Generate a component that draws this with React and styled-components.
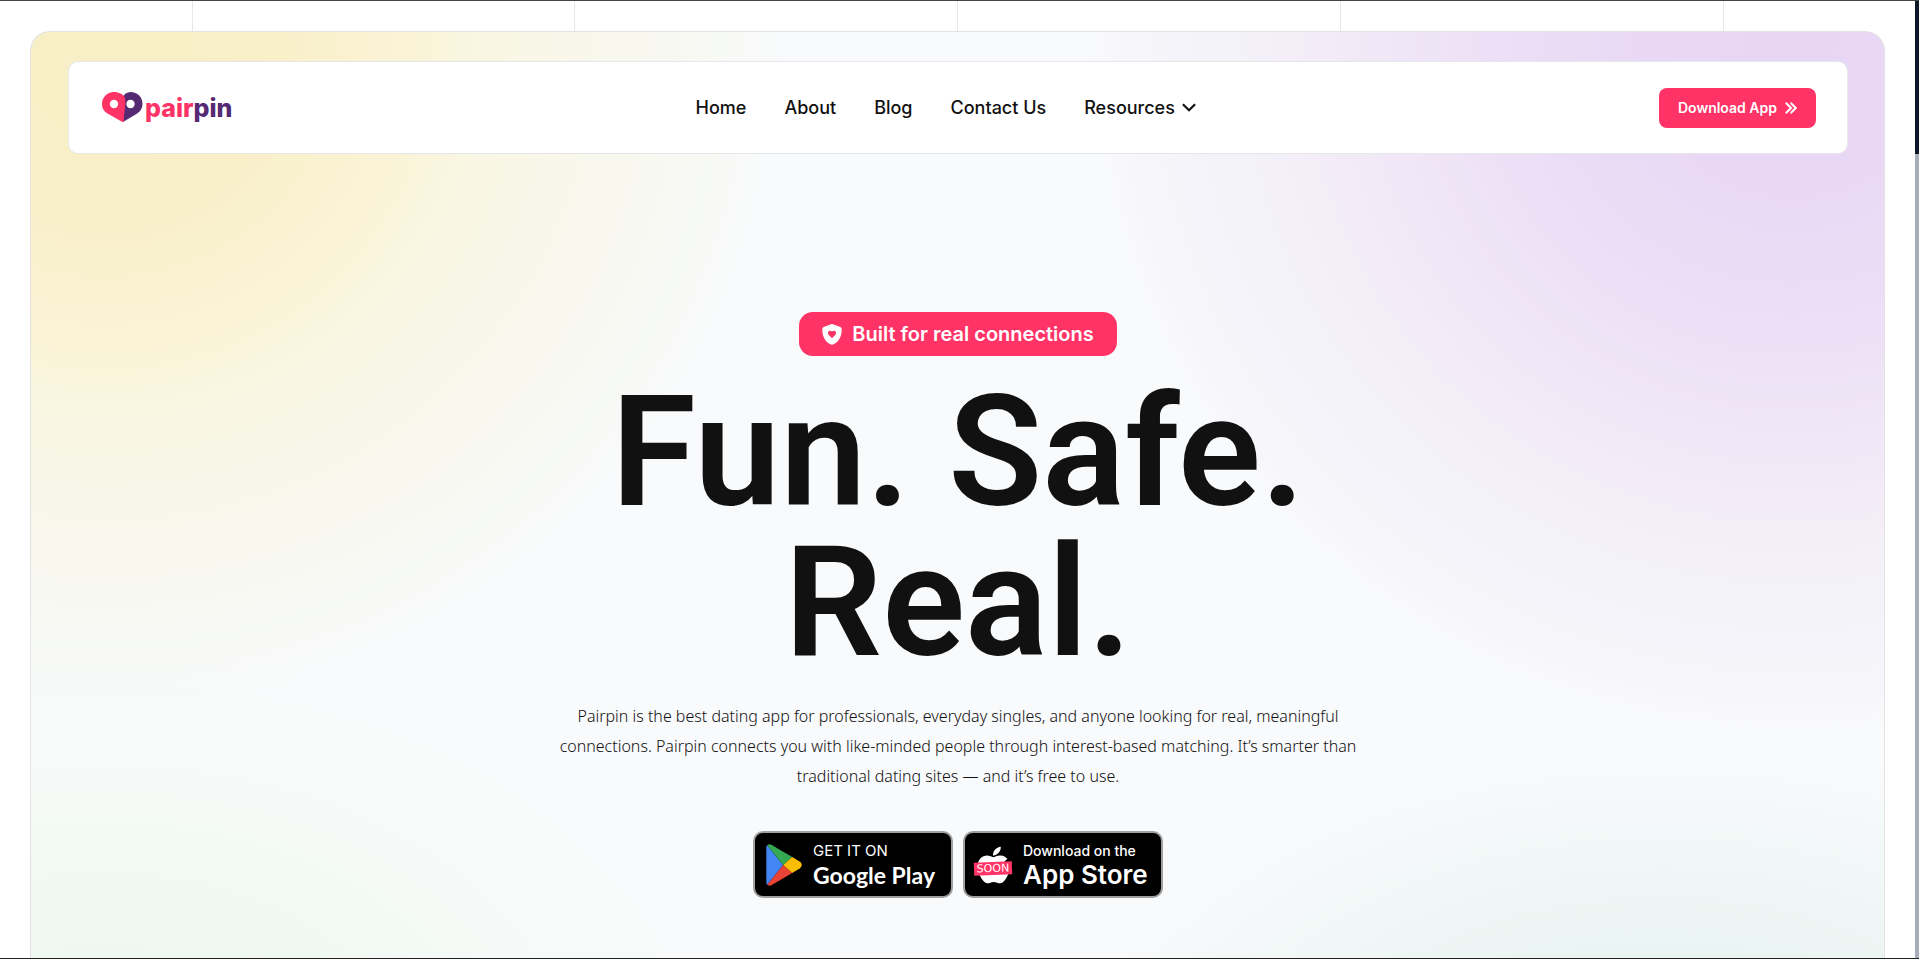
import React from "react";
import styled, { createGlobalStyle } from "styled-components";
import { FaApple } from "react-icons/fa";

const pink = "#ff3366";
const purple = "#552a73";
const line = "#e5e7eb";

const GlobalStyle = createGlobalStyle`
  *, *::before, *::after { box-sizing: border-box; }
  body { margin: 0; background: #fff; color: #111; font-family: Inter, sans-serif; }
  h1, p { margin: 0; }
  a { color: inherit; text-decoration: none; }
`;

const Window = styled.div`
  display: flex;
  height: 100vh;
  overflow: hidden;
  border-top: 1px solid #444;
  border-bottom: 1px solid #222;
`;

const Page = styled.div`
  flex: 1;
  min-width: 0;
  display: flex;
  flex-direction: column;
`;

const ScrollTrack = styled.div`
  width: 4px;
  background: #a7adb9;
`;

const ScrollThumb = styled.div`
  height: 16%;
  background: #0f172a;
`;

const Guides = styled.div`
  flex: none;
  height: 30px;
  margin: 0 10%;
  display: grid;
  grid-template-columns: repeat(4, 1fr);
  border-left: 1px solid ${line};
`;

const Guide = styled.span`
  border-right: 1px solid ${line};
`;

const Hero = styled.main`
  flex: 1;
  margin: 0 30px;
  padding: 29px 36px 0 37px;
  border: 1px solid #e2e2e2;
  border-bottom: 0;
  border-radius: 20px 20px 0 0;
  background:
    radial-gradient(ellipse 680px 660px at 4% 2%, #f9efc6 0%, #f9efc8 24%, #faf3d6 45%, #f9f6e2 55%, #f8f7ed 74%, rgba(247, 249, 244, 0.9) 90%, rgba(249, 250, 252, 0) 100%),
    radial-gradient(ellipse 700px 690px at 95% 1%, #e8d7f4 0%, #e8d8f5 20%, #eddff6 42%, #f2e9f7 62%, #f4f2f9 80%, rgba(246, 245, 250, 0.9) 94%, rgba(249, 250, 252, 0) 100%),
    radial-gradient(ellipse 640px 420px at 4% 112%, #ecf8eb 0%, rgba(239, 248, 240, 0.9) 35%, rgba(245, 250, 247, 0.8) 72%, rgba(249, 250, 252, 0) 100%),
    radial-gradient(ellipse 620px 380px at 88% 118%, #e2f1ec 0%, rgba(234, 244, 242, 0.95) 48%, rgba(244, 248, 248, 0.9) 85%, rgba(249, 250, 252, 0) 100%),
    #f9fafc;
`;

const Header = styled.header`
  display: flex;
  align-items: center;
  justify-content: space-between;
  height: 93px;
  padding: 0 31px 0 33px;
  background: #fff;
  border: 1px solid ${line};
  border-radius: 10px;
`;

const Brand = styled.a`
  display: flex;
  align-items: center;
  gap: 2px;
  font-size: 25px;
  line-height: 30px;
  font-weight: 800;
  color: ${pink};
`;

const BrandEnd = styled.span`
  color: ${purple};
`;

const Nav = styled.nav`
  display: flex;
  gap: 38px;
  font-size: 18px;
  line-height: 24px;
  font-weight: 500;
`;

const NavLink = styled.a`
  display: flex;
  align-items: center;
  gap: 7px;
`;

const DownloadButton = styled.button`
  display: flex;
  align-items: center;
  gap: 8px;
  height: 40px;
  padding: 0 19px;
  border: 0;
  border-radius: 8px;
  background: ${pink};
  color: #fff;
  font: 600 14px/20px Inter, sans-serif;
`;

const Intro = styled.section`
  display: flex;
  flex-direction: column;
  align-items: center;
  padding-top: 158px;
  text-align: center;
`;

const Tag = styled.div`
  display: flex;
  align-items: center;
  gap: 10px;
  height: 44px;
  padding: 0 23px;
  border-radius: 14px;
  background: ${pink};
  color: #fff;
  font-size: 20px;
  font-weight: 600;
`;

const Title = styled.h1`
  max-width: 820px;
  margin-top: 22px;
  font: 600 154px/150px Roboto, sans-serif;
`;

const Lead = styled.p`
  max-width: 820px;
  margin-top: 23px;
  font: 300 16px/30px "Noto Sans", sans-serif;
`;

const Stores = styled.div`
  display: flex;
  gap: 10px;
  margin-top: 40px;
`;

const StoreLink = styled.a`
  display: flex;
  align-items: center;
  gap: ${(p) => p.$gap}px;
  width: 200px;
  height: 67px;
  padding-left: ${(p) => p.$inset}px;
  border: 2px solid #a0a0a0;
  border-radius: 10px;
  background: #000;
  color: #fff;
  text-align: left;
`;

const StoreText = styled.span`
  display: flex;
  flex-direction: column;
`;

const StoreSmall = styled.span`
  font-size: ${(p) => p.$size}px;
  line-height: 20px;
  font-weight: ${(p) => p.$weight};
`;

const StoreName = styled.span`
  font: ${(p) => p.$weight} ${(p) => p.$size}px/28px ${(p) => p.$face}, sans-serif;
`;

const AppleMark = styled.span`
  position: relative;
  display: flex;
  justify-content: center;
  width: 38px;
`;

const Soon = styled.span`
  position: absolute;
  top: 18px;
  left: 0;
  width: 38px;
  background: ${pink};
  font: 400 11px/13px "DejaVu Sans", sans-serif;
  text-align: center;
  transform: rotate(-2deg);
`;

const Heart = () => (
  <svg width="41" height="31" viewBox="0 0 41 31" aria-hidden="true">
    <path fill={purple} d="M28.5 0C35.5 0 40.5 5.4 40.5 12C40.5 16.4 38.6 19.2 34.8 21.8L21 30L20 6C22 2.3 25 0 28.5 0Z" />
    <path fill={pink} d="M12 0C17 0 21.2 2.3 22.6 5.2C24.4 9 22.4 18 21.6 30L20.4 30L5.5 21.6C1.8 19.2 0 16.2 0 12C0 5.4 5.2 0 12 0Z" />
    <circle cx="12" cy="12" r="4.2" fill="#fff" />
    <circle cx="28.5" cy="12" r="4.2" fill="#fff" />
  </svg>
);

const Chevron = () => (
  <svg width="14" height="9" viewBox="0 0 14 9" fill="none" stroke="#111" strokeWidth="2.2" aria-hidden="true">
    <path d="M.9 1.2L7 7.2L13.1 1.2" />
  </svg>
);

const DoubleChevron = () => (
  <svg width="12" height="12" viewBox="0 0 12 12" fill="none" stroke="#fff" strokeWidth="2" aria-hidden="true">
    <path d="M.8 .8L6 6L.8 11.2M5.6 .8L10.8 6L5.6 11.2" />
  </svg>
);

const Shield = () => (
  <svg width="20" height="21" viewBox="0 0 20 21" aria-hidden="true">
    <path fill="#fff" d="M9 .3Q10 -.1 11 .3L18.4 3Q19.6 3.5 19.7 4.8C20.1 11.5 17 18.2 11 20.6Q10 21 9 20.6C3 18.2 -.1 11.5 .3 4.8Q.4 3.5 1.6 3Z" />
    <path fill={pink} d="M10 14.2L6.6 10.7C4.6 8.3 7.7 5.2 10 7.6C12.3 5.2 15.4 8.3 13.4 10.7Z" />
  </svg>
);

const PlayMark = () => (
  <svg width="36" height="42" viewBox="0 0 36 42" aria-hidden="true">
    <path fill="#4285f4" d="M1.2 1.2Q.3 2 .3 3.6V38.4Q.3 40 1.2 40.8L17.2 21Z" />
    <path fill="#34a853" d="M1.2 1.2Q3.2 -.4 5.8 .9L26.2 13L17.2 21Z" />
    <path fill="#ea4335" d="M1.2 40.8Q3.2 42.4 5.8 41.1L26.2 29L17.2 21Z" />
    <path fill="#fbbc04" d="M26.2 13L34 17.8Q37.6 21 34 24.2L26.2 29L17.2 21Z" />
  </svg>
);

const links = ["Home", "About", "Blog", "Contact Us"];

export default function App() {
  return (
    <Window>
      <GlobalStyle />
      <Page>
        <Guides aria-hidden="true">
          <Guide />
          <Guide />
          <Guide />
          <Guide />
        </Guides>
        <Hero>
          <Header>
            <Brand href="#">
              <Heart />
              <span>
                pair<BrandEnd>pin</BrandEnd>
              </span>
            </Brand>
            <Nav>
              {links.map((label) => (
                <NavLink href="#" key={label}>
                  {label}
                </NavLink>
              ))}
              <NavLink href="#">
                Resources
                <Chevron />
              </NavLink>
            </Nav>
            <DownloadButton type="button">
              Download App
              <DoubleChevron />
            </DownloadButton>
          </Header>
          <Intro>
            <Tag>
              <Shield />
              Built for real connections
            </Tag>
            <Title>Fun. Safe. Real.</Title>
            <Lead>
              Pairpin is the best dating app for professionals, everyday singles, and anyone looking for real,
              meaningful connections. Pairpin connects you with like-minded people through interest-based matching.
              It’s smarter than traditional dating sites — and it’s free to use.
            </Lead>
            <Stores>
              <StoreLink href="#" $inset={11} $gap={11}>
                <PlayMark />
                <StoreText>
                  <StoreSmall $size={15} $weight={400}>GET IT ON</StoreSmall>
                  <StoreName $size={23} $weight={700} $face="Lato">Google Play</StoreName>
                </StoreText>
              </StoreLink>
              <StoreLink href="#" $inset={9} $gap={11}>
                <AppleMark>
                  <FaApple size={42} />
                  <Soon>SOON</Soon>
                </AppleMark>
                <StoreText>
                  <StoreSmall $size={14} $weight={500}>Download on the</StoreSmall>
                  <StoreName $size={26} $weight={600} $face="Inter">App Store</StoreName>
                </StoreText>
              </StoreLink>
            </Stores>
          </Intro>
        </Hero>
      </Page>
      <ScrollTrack aria-hidden="true">
        <ScrollThumb />
      </ScrollTrack>
    </Window>
  );
}
